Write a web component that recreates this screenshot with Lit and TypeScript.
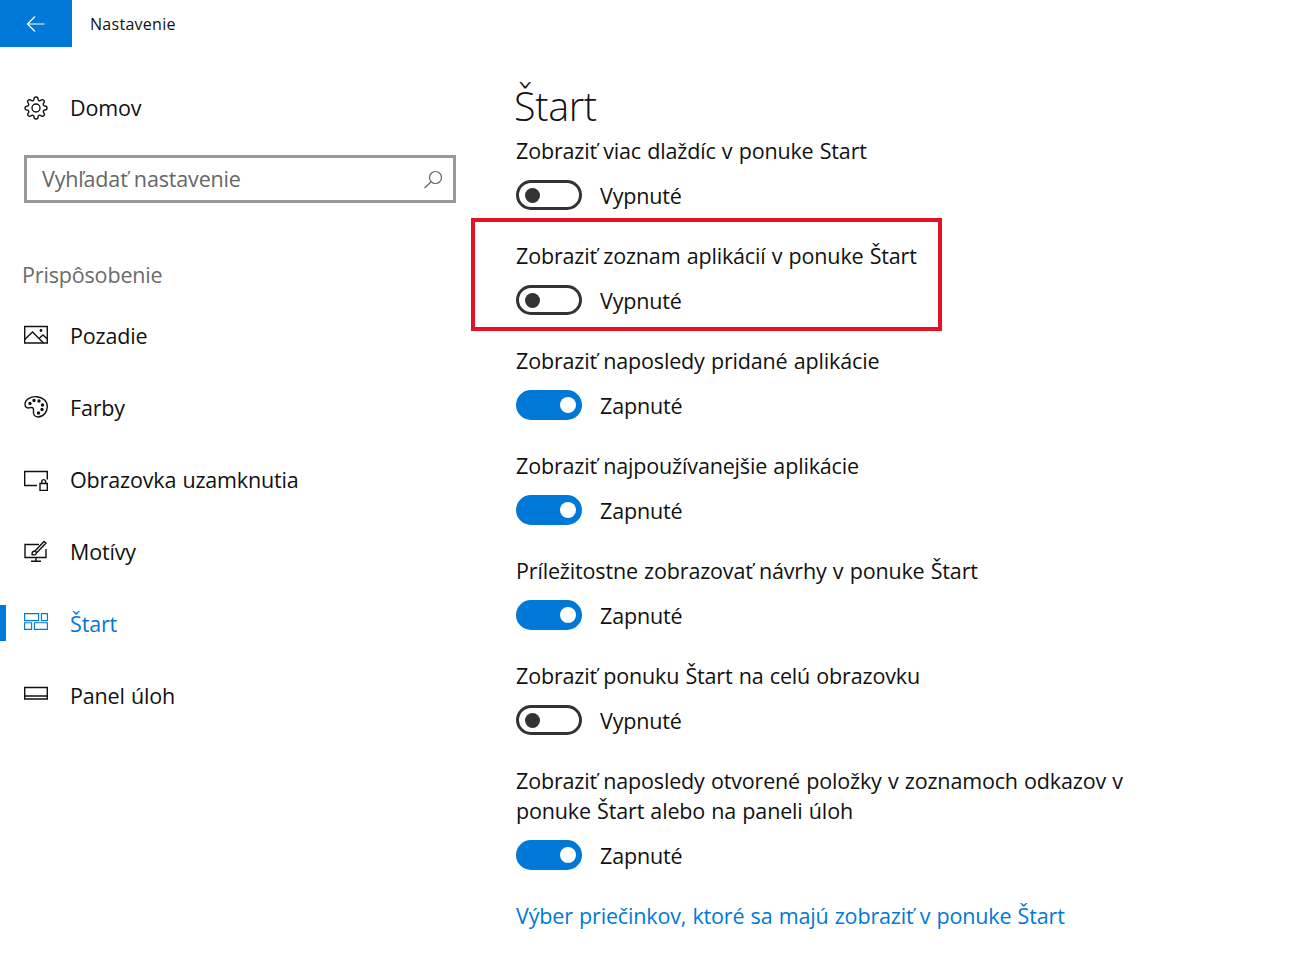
import { LitElement, html, css, svg } from "lit";
import { customElement } from "lit/decorators.js";

const icons: Record<string, unknown> = {
  gear: svg`<path d="M19.4 15a1.65 1.65 0 0 0 .33 1.82l.06.06a2 2 0 0 1 0 2.83 2 2 0 0 1-2.83 0l-.06-.06a1.65 1.65 0 0 0-1.82-.33 1.65 1.65 0 0 0-1 1.51V21a2 2 0 0 1-2 2 2 2 0 0 1-2-2v-.09A1.65 1.65 0 0 0 9 19.4a1.65 1.65 0 0 0-1.82.33l-.06.06a2 2 0 0 1-2.83 0 2 2 0 0 1 0-2.83l.06-.06a1.65 1.65 0 0 0 .33-1.82 1.65 1.65 0 0 0-1.51-1H3a2 2 0 0 1-2-2 2 2 0 0 1 2-2h.09A1.65 1.65 0 0 0 4.6 9a1.65 1.65 0 0 0-.33-1.82l-.06-.06a2 2 0 0 1 0-2.83 2 2 0 0 1 2.83 0l.06.06a1.65 1.65 0 0 0 1.82.33H9a1.65 1.65 0 0 0 1-1.51V3a2 2 0 0 1 2-2 2 2 0 0 1 2 2v.09a1.65 1.65 0 0 0 1 1.51 1.65 1.65 0 0 0 1.82-.33l.06-.06a2 2 0 0 1 2.83 0 2 2 0 0 1 0 2.83l-.06.06a1.65 1.65 0 0 0-.33 1.82V9a1.65 1.65 0 0 0 1.51 1H21a2 2 0 0 1 2 2 2 2 0 0 1-2 2h-.09a1.65 1.65 0 0 0-1.51 1z"/><circle cx="12" cy="12" r="4"/>`,
  picture: svg`<path d="M.7 3.500h22.600v16.500H.7z"/><path d="M.7 16.500L8.500 9l11 11M15 15.500l4-3.500 4.300 4"/><circle cx="17" cy="7.500" r=".7"/>`,
  palette: svg`<path d="M13 1.700C6.500 1.200 1 4.500 1 9.500c0 3.200 3 4 5 3.200 2.500-.8 4 .3 3.500 3-.6 3.500 1 6.300 4.500 6.300 5.500 0 9.300-5 9.300-10.500 0-5.500-4.500-9.300-10.300-9.800z"/><circle cx="6" cy="8.500" r="1" fill="currentColor"/><circle cx="10" cy="5.500" r="1" fill="currentColor"/><circle cx="15" cy="6" r="1" fill="currentColor"/><circle cx="18.500" cy="10" r="1" fill="currentColor"/><circle cx="18" cy="14.500" r="1" fill="currentColor"/><circle cx="14.500" cy="18" r="1" fill="currentColor"/>`,
  lock: svg`<path d="M13 18.500H.7v-14h22.600v8"/><path d="M16 16.500h7.300v7H16zM17.800 16.500V14a2 2 0 0 1 3.800 0v2.500"/>`,
  themes: svg`<path d="M15 5.500H1v13h21V10M12 18.500v3.500M7 22.300h10"/><path d="M8 15.500c0-2.500 1-3.500 3-3.500l1.500 1.500c0 2-2 3-4.500 2zM11 12l9-9.500 2 1.500-9 9.500"/>`,
  start: svg`<path stroke-width="1.150" d="M.6 2.600h14v7H.6zM17.400 2.600h6v7h-6zM.6 11.700h7v6.700h-7zM10.400 11.700h13v6.700h-13z"/>`,
  taskbar: svg`<path d="M.7 4.500h22.600v11.500H.7zM.7 13h22.600"/>`,
};

const nav = [
  ["picture", "Pozadie"],
  ["palette", "Farby"],
  ["lock", "Obrazovka uzamknutia"],
  ["themes", "Motívy"],
  ["start", "Štart", true],
  ["taskbar", "Panel úloh"],
] as const;

const settings: { label: string; on: boolean; marked?: boolean }[] = [
  { label: "Zobraziť viac dlaždíc v ponuke Start", on: false },
  { label: "Zobraziť zoznam aplikácií v ponuke Štart", on: false, marked: true },
  { label: "Zobraziť naposledy pridané aplikácie", on: true },
  { label: "Zobraziť najpoužívanejšie aplikácie", on: true },
  { label: "Príležitostne zobrazovať návrhy v ponuke Štart", on: true },
  { label: "Zobraziť ponuku Štart na celú obrazovku", on: false },
  { label: "Zobraziť naposledy otvorené položky v zoznamoch odkazov v ponuke Štart alebo na paneli úloh", on: true },
];

@customElement("app-root")
export class AppRoot extends LitElement {
  static styles = css`
    :host { display: block; width: 1316px; height: 957px; overflow: hidden; background: #fff; color: #111;
      font-family: "Open Sans", "Noto Sans", sans-serif; font-size: 21.500px; font-kerning: none; letter-spacing: -.16px; word-spacing: .8px; }
    .top { display: flex; align-items: center; height: 47px; }
    .back { width: 72px; height: 47px; background: #0078d7; display: flex; align-items: center; justify-content: center; }
    .back svg { width: 20px; height: 20px; fill: none; stroke: #fff; stroke-width: 1.2; }
    .app-title { margin-left: 18px; font-size: 16px; letter-spacing: .28px; }
    .columns { display: grid; grid-template-columns: 516px 1fr; }
    .side { padding-top: 25px; }
    .row { position: relative; display: flex; align-items: center; gap: 22px; height: 72px; padding-left: 24px; }
    .row.home span { margin-top: -1px; }
    .row svg { width: 24px; height: 24px; flex: none; fill: none; stroke: currentColor; stroke-width: 1.4; }
    .row.active { color: #0078d7; }
    .row.active::before { content: ""; position: absolute; left: 0; top: 18px; width: 6px; height: 36px; background: #0078d7; }
    .search { display: flex; align-items: center; justify-content: space-between; box-sizing: border-box; width: 432px; height: 48px; margin: 11px 0 0 24px; border: 3px solid #999; padding: 0 10px 1px 15px; color: #666; }
    .search svg { width: 20px; height: 20px; margin-top: 1px; fill: none; stroke: #666; stroke-width: 1.2; }
    .section { margin: 54px 0 0 22px; height: 42px; line-height: 36px; color: #6b6b6b; }
    .main { padding-top: 29px; }
    h1 { margin: 0 0 0 -2px; height: 60px; line-height: 60px; font-size: 39.500px; font-weight: 300; letter-spacing: -.3px; }
    .setting { position: relative; width: 640px; padding-bottom: 31px; }
    .label { line-height: 30px; margin-bottom: 14px; }
    .state { display: flex; align-items: center; gap: 18px; height: 30px; }
    .toggle { box-sizing: border-box; width: 66px; height: 30px; border: 3px solid #333; border-radius: 15px; display: flex; align-items: center; padding: 0 5.500px; }
    .toggle i { width: 15px; height: 15px; border-radius: 50%; background: #333; }
    .toggle.on { background: #0078d7; border-color: #0078d7; justify-content: flex-end; padding: 0 3px; }
    .toggle.on i { width: 16px; height: 16px; background: #fff; }
    .mark { position: absolute; left: -45px; top: -23px; width: 471px; height: 113px; box-sizing: border-box; border: 4px solid #e81123; pointer-events: none; }
    .link { color: #0078d7; line-height: 30px; }
  `;

  render() {
    return html`
      <div class="top">
        <div class="back"><svg viewBox="0 0 20 20"><path d="M18.500 10H1.500M9 2.500L1.500 10 9 17.500"/></svg></div>
        <div class="app-title">Nastavenie</div>
      </div>
      <div class="columns">
        <nav class="side">
          <div class="row home"><svg viewBox="0 0 24 24">${icons.gear}</svg><span>Domov</span></div>
          <div class="search"><span>Vyhľadať nastavenie</span><svg viewBox="0 0 20 20"><circle cx="12.500" cy="8.500" r="6"/><path d="M8.200 12.800L1.500 19"/></svg></div>
          <div class="section">Prispôsobenie</div>
          ${nav.map(([icon, text, active]) => html`
            <div class="row ${active ? "active" : ""}"><svg viewBox="0 0 24 24">${icons[icon]}</svg><span>${text}</span></div>`)}
        </nav>
        <main class="main">
          <h1>Štart</h1>
          ${settings.map((s) => html`
            <div class="setting">
              <div class="label">${s.label}</div>
              <div class="state"><div class="toggle ${s.on ? "on" : ""}"><i></i></div><span>${s.on ? "Zapnuté" : "Vypnuté"}</span></div>
              ${s.marked ? html`<div class="mark"></div>` : ""}
            </div>`)}
          <div class="link">Výber priečinkov, ktoré sa majú zobraziť v ponuke Štart</div>
        </main>
      </div>`;
  }
}
